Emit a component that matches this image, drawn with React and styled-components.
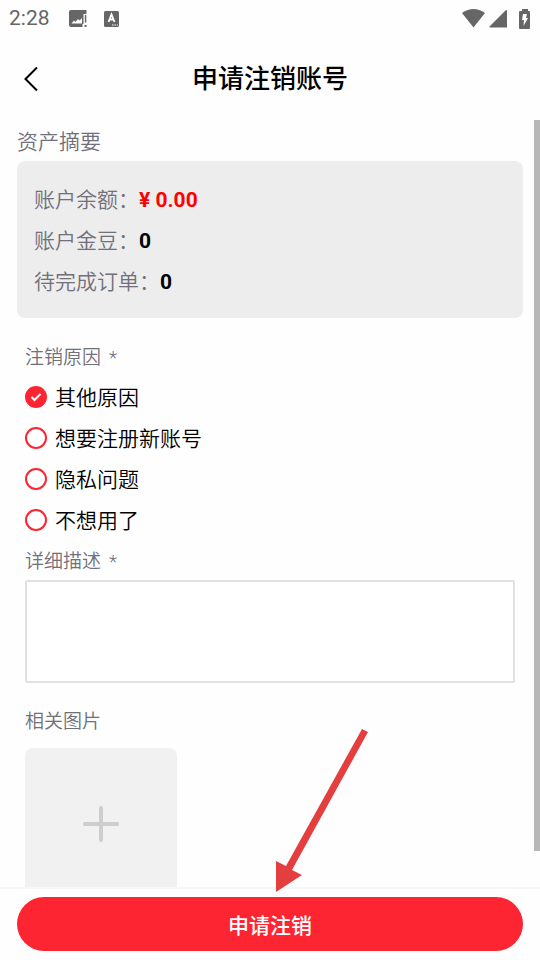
import React, { useState } from "react";
import styled, { createGlobalStyle } from "styled-components";

const GlobalStyle = createGlobalStyle`
  *, *::before, *::after { box-sizing: border-box; }
  body {
    margin: 0;
    background: #fff;
    color: #000;
    font-family: Roboto, "Noto Sans CJK SC", sans-serif;
  }
  button, input, textarea { font: inherit; }
`;

const Screen = styled.div`
  display: flex;
  flex-direction: column;
  height: 100vh;
  background: #fefefe;
`;

const StatusBar = styled.div`
  display: flex;
  align-items: center;
  flex: none;
  height: 37px;
  padding: 0 9px;
  color: #666;
`;

const Clock = styled.time`
  flex: none;
  margin-right: 19px;
  font-size: 21px;
  line-height: 37px;
`;

const Notices = styled.div`
  display: flex;
  align-items: center;
  flex: 1;
  gap: 16px;
`;

const Signals = styled.div`
  display: flex;
  align-items: center;
  gap: 4px;
`;

const Icon = styled.svg`
  display: block;
  flex: none;
`;

const Header = styled.header`
  display: grid;
  grid-template-columns: 44px 1fr 44px;
  align-items: center;
  flex: none;
  height: 83px;
  padding: 0 9px;
`;

const BackButton = styled.button`
  display: flex;
  align-items: center;
  justify-content: center;
  width: 44px;
  height: 44px;
  padding: 0;
  border: 0;
  background: none;
  color: #000;
`;

const Title = styled.h1`
  margin: 0;
  font-size: 26px;
  font-weight: 500;
  line-height: 40px;
  text-align: center;
`;

const Body = styled.div`
  position: relative;
  flex: 1;
  min-height: 0;
`;

const Content = styled.main`
  height: 100%;
  padding: 0 17px 17px;
  overflow-y: auto;
  scrollbar-width: none;
`;

const ScrollThumb = styled.div`
  position: absolute;
  top: 0;
  right: 0;
  bottom: 36px;
  width: 6px;
  background: #b7b7b7;
`;

const SummaryTitle = styled.h2`
  margin: 0;
  padding-top: 4px;
  color: #70707a;
  font-size: 21px;
  font-weight: 350;
  line-height: 37px;
`;

const SummaryCard = styled.dl`
  margin: 0;
  padding: 19px 17px 15px;
  border-radius: 8px;
  background: #ededed;
`;

const SummaryRow = styled.div`
  display: flex;
  font-size: 21px;
  line-height: 41px;
`;

const Term = styled.dt`
  color: #70707a;
  font-weight: 350;
`;

const Amount = styled.dd`
  margin: 0;
  color: ${(p) => (p.$alert ? "#ff0000" : "#000")};
  font-weight: 700;
`;

const Form = styled.form`
  padding: 18px 8px 0;
`;

const Reasons = styled.fieldset`
  margin: 0;
  padding: 0;
  border: 0;
`;

const fieldText = `
  display: block;
  padding: 3px 0 0;
  color: #70707a;
  font-size: 19px;
  font-weight: 350;
  line-height: 37px;
`;

const Legend = styled.legend`
  ${fieldText}
`;

const FieldLabel = styled.label`
  ${fieldText}
`;

const Required = styled.span`
  margin-left: 8px;
`;

const Option = styled.label`
  display: flex;
  align-items: center;
  gap: 8px;
  height: 41px;
  font-size: 21px;
  font-weight: 350;
`;

const OptionText = styled.span`
  padding-top: 4px;
  line-height: 37px;
`;

const RadioBox = styled.span`
  display: grid;
  place-items: center;

  & > * { grid-area: 1 / 1; }
`;

const Radio = styled.input`
  appearance: none;
  width: 22px;
  height: 22px;
  margin: 0;
  border: 2px solid #fd2531;
  border-radius: 50%;
  background: #fff;

  &:checked { background: #fd2531; }
`;

const Description = styled.textarea`
  display: block;
  width: 100%;
  height: 103px;
  margin-bottom: 17px;
  padding: 8px;
  border: 2px solid #e1e1e1;
  border-radius: 2px;
  background: #fff;
  font-size: 19px;
  resize: none;
`;

const Upload = styled.button`
  display: flex;
  align-items: center;
  justify-content: center;
  width: 152px;
  height: 152px;
  margin-top: 8px;
  padding: 0;
  border: 0;
  border-radius: 8px;
  background: #f1f1f1;
`;

const Footer = styled.footer`
  position: relative;
  flex: none;
  padding: 8px 17px 9px;
  border-top: 2px solid #f7f7f7;
`;

const Submit = styled.button`
  display: block;
  width: 100%;
  height: 54px;
  padding: 0;
  border: 0;
  border-radius: 27px;
  background: #fd2531;
  color: #fff;
  font-size: 21px;
  font-weight: 500;
`;

const Pointer = styled.svg`
  position: absolute;
  left: 50%;
  bottom: 68px;
  pointer-events: none;
`;

const summary = [
  { name: "账户余额：", value: "¥ 0.00", alert: true },
  { name: "账户金豆：", value: "0" },
  { name: "待完成订单：", value: "0" },
];

const reasons = ["其他原因", "想要注册新账号", "隐私问题", "不想用了"];

export default function App() {
  const [reason, setReason] = useState(reasons[0]);

  return (
    <>
      <GlobalStyle />
      <Screen>
        <StatusBar>
          <Clock>2:28</Clock>
          <Notices>
            <Icon width="19" height="18" viewBox="0 0 19 18" aria-hidden="true">
              <path fill="#666" d="M2 0H17.500V4H14.500V14H13.500V17H2Q0 17 0 15V2Q0 0 2 0Z" />
              <path fill="#fefefe" d="M2.500 13.500L5 10.500L6.500 12L9 9L10.500 10.500L13 8V13.500Z" />
              <path fill="#666" d="M15.800 5H17.300V12.500H15.800ZM15.500 15H17.500V17H15.500Z" />
            </Icon>
            <Icon width="15" height="16" viewBox="0 0 15 16" aria-hidden="true">
              <rect width="15" height="16" rx="1.5" fill="#666" />
              <path d="M4.500 11L7.500 3.500L10.500 11M5.700 8.500H9.300" fill="none" stroke="#fff" strokeWidth="1.8" />
              <path d="M8 14H9.500M10.500 14H12M13 14H14" stroke="#fff" strokeWidth="1.2" />
            </Icon>
          </Notices>
          <Signals>
            <Icon width="23" height="19" viewBox="0 0 23 19" aria-hidden="true">
              <path d="M0 4Q11.500 -4 23 4L11.500 18.500Z" fill="#666" />
            </Icon>
            <Icon width="18" height="19" viewBox="0 0 18 19" aria-hidden="true">
              <path d="M18 2V18.500H1.500Q-.5 18.500 1 17L16 2Q18 0 18 2Z" fill="#666" />
            </Icon>
            <Icon width="20" height="20" viewBox="0 0 20 20" aria-hidden="true">
              <path d="M11 0H17V2H18Q19 2 19 3V19Q19 20 18 20H9Q8 20 8 19V3Q8 2 9 2H11Z" fill="#666" />
              <path d="M12 5H16L15 9H17L12.500 17L13 11H11Z" fill="#fff" />
            </Icon>
          </Signals>
        </StatusBar>
        <Header>
          <BackButton type="button" aria-label="返回">
            <Icon width="16" height="26" viewBox="0 0 16 26" fill="none" aria-hidden="true">
              <path d="M14 1.500L2.500 13L14 24.500" stroke="#000" strokeWidth="2" />
            </Icon>
          </BackButton>
          <Title>申请注销账号</Title>
        </Header>
        <Body>
          <Content>
            <SummaryTitle>资产摘要</SummaryTitle>
            <SummaryCard>
              {summary.map((item) => (
                <SummaryRow key={item.name}>
                  <Term>{item.name}</Term>
                  <Amount $alert={item.alert}>{item.value}</Amount>
                </SummaryRow>
              ))}
            </SummaryCard>
            <Form id="cancel-form" onSubmit={(e) => e.preventDefault()}>
              <Reasons>
                <Legend>注销原因<Required>*</Required></Legend>
                {reasons.map((name) => (
                  <Option key={name}>
                    <RadioBox>
                      <Radio
                        type="radio"
                        name="reason"
                        checked={reason === name}
                        onChange={() => setReason(name)}
                      />
                      {reason === name && (
                        <Icon width="12" height="10" viewBox="0 0 12 10" fill="none" aria-hidden="true">
                          <path d="M1.500 5L4.500 8L10.500 2" stroke="#fff" strokeWidth="2" />
                        </Icon>
                      )}
                    </RadioBox>
                    <OptionText>{name}</OptionText>
                  </Option>
                ))}
              </Reasons>
              <FieldLabel htmlFor="description">详细描述<Required>*</Required></FieldLabel>
              <Description id="description" />
              <FieldLabel htmlFor="upload">相关图片</FieldLabel>
              <Upload id="upload" type="button">
                <Icon width="36" height="36" viewBox="0 0 36 36" aria-hidden="true">
                  <path d="M18 2V34M2 18H34" stroke="#cdcdcd" strokeWidth="4" strokeLinecap="round" />
                </Icon>
              </Upload>
            </Form>
          </Content>
          <ScrollThumb />
        </Body>
        <Footer>
          <Submit type="submit" form="cancel-form">申请注销</Submit>
          <Pointer width="100" height="164" viewBox="0 0 100 164" aria-hidden="true">
            <path d="M92 1L98 4L22 142L32 147L6 164V133L16 138Z" fill="#e43e3f" />
          </Pointer>
        </Footer>
      </Screen>
    </>
  );
}
